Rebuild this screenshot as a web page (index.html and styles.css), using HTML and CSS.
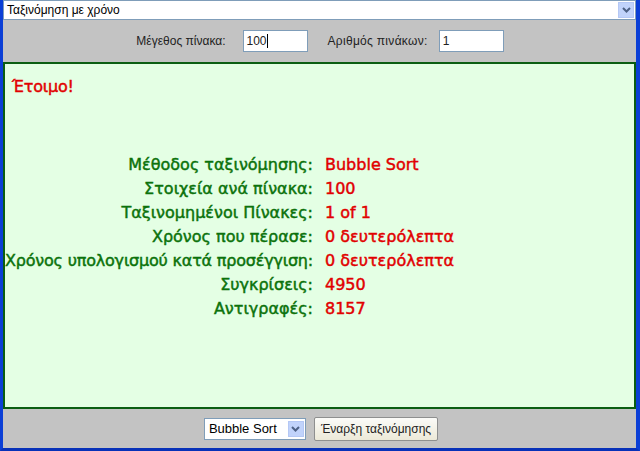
FILE: index.html
```html
<!DOCTYPE html>
<html lang="el">

<head>
    <meta charset="UTF-8">
    <title>Ταξινόμηση με χρόνο</title>
    <link rel="stylesheet" href="styles.css">
</head>

<body>
    <div class="frame">
        <div class="mode-select">
            <span>Ταξινόμηση με χρόνο</span>
            <span class="arrow-btn">
                <svg width="9" height="6" viewBox="0 0 9 6"><path d="M1 1 L4.5 4.5 L8 1" fill="none" stroke="#4d6185" stroke-width="2"/></svg>
            </span>
        </div>

        <div class="params">
            <label>Μέγεθος πίνακα:</label>
            <div class="field caret">100</div>
            <label class="second">Αριθμός πινάκων:</label>
            <div class="field">1</div>
        </div>

        <div class="panel">
            <div class="status">Έτοιμο!</div>
            <div class="stats">
                <div class="key">Μέθοδος ταξινόμησης:</div>
                <div class="val">Bubble Sort</div>
                <div class="key">Στοιχεία ανά πίνακα:</div>
                <div class="val">100</div>
                <div class="key">Ταξινομημένοι Πίνακες:</div>
                <div class="val">1 of 1</div>
                <div class="key">Χρόνος που πέρασε:</div>
                <div class="val">0 δευτερόλεπτα</div>
                <div class="key long">Χρόνος υπολογισμού κατά προσέγγιση:</div>
                <div class="val">0 δευτερόλεπτα</div>
                <div class="key">Συγκρίσεις:</div>
                <div class="val">4950</div>
                <div class="key">Αντιγραφές:</div>
                <div class="val">8157</div>
            </div>
        </div>

        <div class="footer">
            <div class="algo-select">
                <span>Bubble Sort</span>
                <span class="arrow-btn">
                    <svg width="9" height="6" viewBox="0 0 9 6"><path d="M1 1 L4.5 4.5 L8 1" fill="none" stroke="#4d6185" stroke-width="2"/></svg>
                </span>
            </div>
            <button class="start">Έναρξη ταξινόμησης</button>
        </div>
    </div>
</body>

</html>
```

FILE: styles.css
```css
body {
    margin: 0;
    font-family: "Liberation Sans", sans-serif;
}

.frame {
    width: 640px;
    height: 451px;
    box-sizing: border-box;
    border-left: 3px solid #0b3fd6;
    border-right: 4px solid #0b3fd6;
    border-bottom: 3px solid #0831b8;
    background: #c3c3c3;
    display: flex;
    flex-direction: column;
}

.mode-select {
    height: 20px;
    box-sizing: border-box;
    border: 1px solid #7f9db9;
    background: #fff;
    display: flex;
    align-items: center;
    justify-content: space-between;
    padding-left: 3px;
    font-size: 12px;
}

.arrow-btn {
    width: 16px;
    height: 16px;
    margin-right: 1px;
    background: #c1d3fb;
    border: 1px solid #b5c8f5;
    box-sizing: border-box;
    display: flex;
    align-items: center;
    justify-content: center;
}

.params {
    height: 42px;
    display: flex;
    align-items: center;
    justify-content: center;
    font-size: 12px;
    color: #222;
    padding-left: 1px;
}

.params label {
    margin-right: 17px;
}

.params .second {
    margin-left: 20px;
    margin-right: 11px;
    letter-spacing: 0.3px;
}

.field {
    width: 65px;
    height: 22px;
    box-sizing: border-box;
    border: 1px solid #7f9db9;
    background: #fff;
    padding: 3px 0 0 3px;
    font-size: 12px;
}

.caret::after {
    content: "";
    display: inline-block;
    width: 1px;
    height: 14px;
    background: #000;
    vertical-align: -3px;
}

.panel {
    flex: 1;
    border: 2px solid #0b5e12;
    background: #e4ffe4;
    padding: 13px 0 0 7px;
}

.status,
.stats {
    font-family: "DejaVu Sans", sans-serif;
    font-size: 16px;
    -webkit-text-stroke: 0.45px currentColor;
}

.status {
    color: #e10000;
    height: 76px;
    letter-spacing: -0.2px;
}

.stats {
    display: grid;
    grid-template-columns: 308px auto;
    column-gap: 12px;
    margin-left: -7px;
    line-height: 24px;
}

.key {
    color: #0b720b;
    justify-self: end;
    white-space: nowrap;
}

.key.long {
    letter-spacing: -0.2px;
}

.val {
    color: #e10000;
}

.footer {
    height: 39px;
    display: flex;
    align-items: center;
    justify-content: center;
    gap: 8px;
    font-size: 12px;
    padding-left: 3px;
}

.algo-select {
    width: 102px;
    height: 22px;
    box-sizing: border-box;
    border: 1px solid #7f9db9;
    background: #fff;
    display: flex;
    align-items: center;
    justify-content: space-between;
    padding-left: 4px;
    font-size: 13px;
}

.start {
    height: 24px;
    padding: 0 6px;
    border: 1px solid #8e8f8f;
    border-radius: 2px;
    background: linear-gradient(#fbfbf8, #ece9d8);
    font-family: "Liberation Sans", sans-serif;
    font-size: 12px;
    color: #222;
}
```
